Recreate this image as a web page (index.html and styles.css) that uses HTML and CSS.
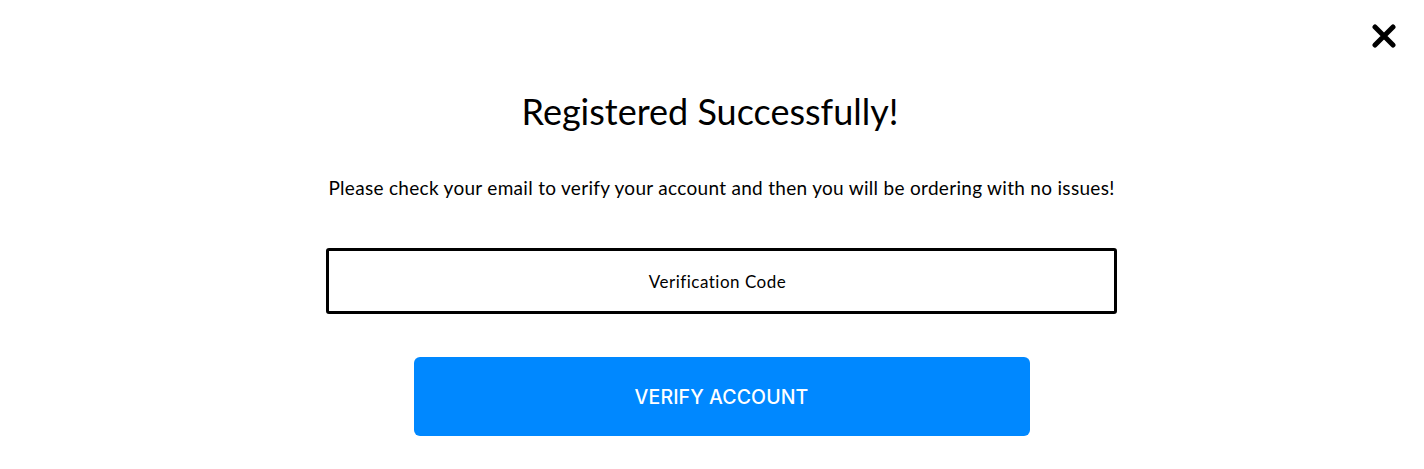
FILE: index.html
```html
<!DOCTYPE html>
<html>
<head>
<meta charset="utf-8">
<link rel="stylesheet" href="styles.css">
</head>
<body>
<div class="page">
  <button class="close" aria-label="Close">
    <svg width="24" height="24" viewBox="0 0 24 24"><path d="M3 3 L21 21 M21 3 L3 21" stroke="#000" stroke-width="5" stroke-linecap="round"/></svg>
  </button>
  <div class="modal">
    <h1 class="title">Registered Successfully!</h1>
    <p class="text">Please check your email to verify your account and then you will be ordering with no issues!</p>
    <input class="code" type="text" placeholder="Verification Code">
    <button class="verify">VERIFY ACCOUNT</button>
  </div>
</div>
</body>
</html>
```
FILE: styles.css
```css
html, body {
  margin: 0;
  padding: 0;
  background: #fff;
}
.page {
  width: 1424px;
  height: 469px;
  position: relative;
  box-sizing: border-box;
  padding: 0 0 0 19px;
}
.close {
  position: absolute;
  top: 24px;
  right: 28px;
  width: 24px;
  height: 24px;
  padding: 0;
  border: 0;
  background: none;
}
.modal {
  display: flex;
  flex-direction: column;
  align-items: center;
  padding-top: 88px;
  font-family: Lato, "Open Sans", sans-serif;
}
.title {
  margin: 0 23px 0 0;
  font-weight: 400;
  font-size: 36px;
  line-height: 46px;
  color: #000;
}
.text {
  margin: 42px 0 0 0;
  font-size: 19px;
  letter-spacing: 0.3px;
  line-height: 24px;
  color: #000;
}
.code {
  margin-top: 48px;
  width: 791px;
  height: 66px;
  box-sizing: border-box;
  border: 3px solid #000;
  border-radius: 3px;
  text-align: center;
  font-family: Lato, sans-serif;
  font-size: 17px;
  letter-spacing: 0.5px;
  padding: 0 8px 0 0;
  outline: none;
}
.code::placeholder {
  color: #000;
}
.verify {
  margin-top: 43px;
  width: 616px;
  height: 79px;
  border: 0;
  border-radius: 6px;
  background: #0088ff;
  color: #fff;
  font-family: Inter, "Open Sans", sans-serif;
  font-weight: 500;
  font-size: 19.5px;
  letter-spacing: 0.1px;
}
```
